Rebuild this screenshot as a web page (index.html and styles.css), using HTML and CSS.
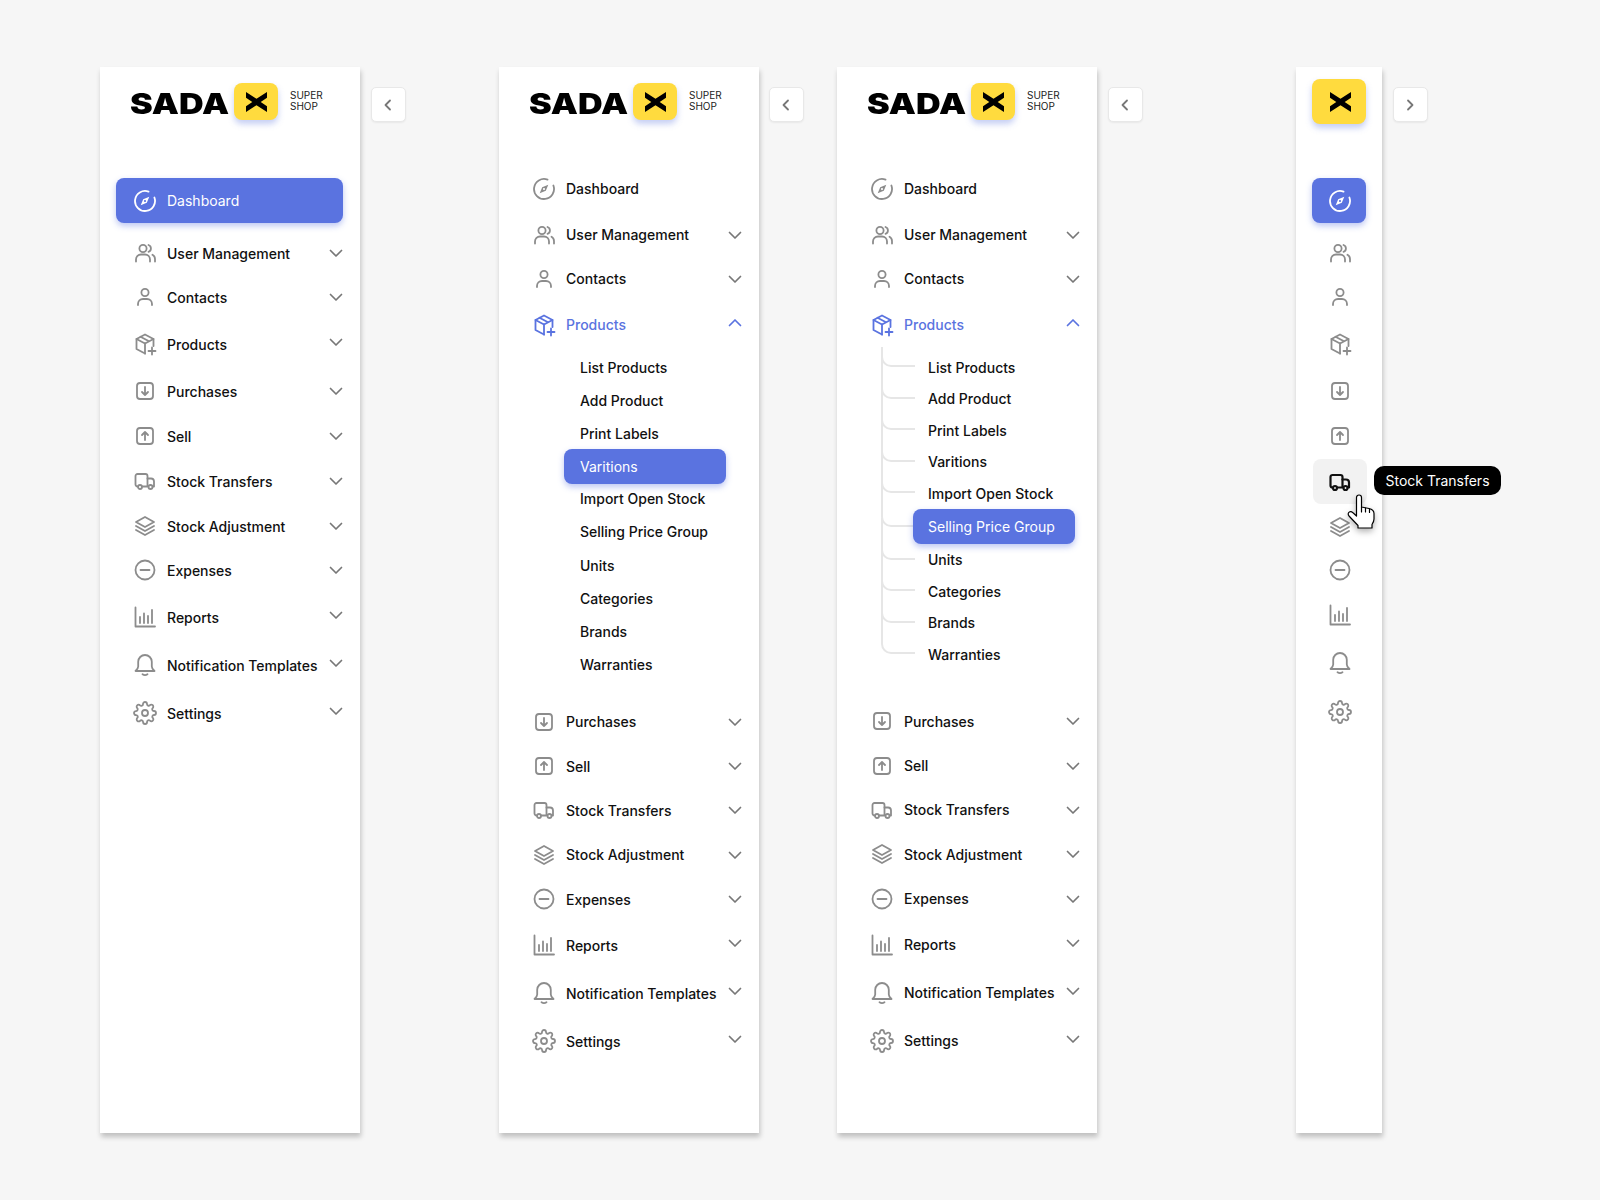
FILE: index.html
```html
<!DOCTYPE html>
<html lang="en">
<head>
<meta charset="utf-8">
<title>SADA sidebar states</title>
<link rel="stylesheet" href="styles.css">
</head>
<body>
<svg class="sprite" xmlns="http://www.w3.org/2000/svg">
  <defs>
    <symbol id="i-compass" viewBox="0 0 24 24"><path d="M15.500 2.600A10 10 0 1 0 21.400 8.500"/><path class="solid" fill-rule="evenodd" d="M16.300 7.700l-2.500 6.100-6.100 2.500 2.500-6.100zM12 10.900a1.100 1.100 0 1 0 0 2.200 1.100 1.100 0 0 0 0-2.200z"/></symbol>
    <symbol id="i-users" viewBox="0 0 24 24"><circle cx="10" cy="7.500" r="3.600"/><path d="M3 20.500v-2a5 5 0 0 1 5-5h4a5 5 0 0 1 5 5v2"/><path d="M15.500 4a3.600 3.600 0 0 1 0 6.800"/><path d="M19.500 13.800a5 5 0 0 1 2.500 4.400v2.300"/></symbol>
    <symbol id="i-user" viewBox="0 0 24 24"><circle cx="12" cy="7.500" r="3.600"/><path d="M5 20v-1a5 5 0 0 1 5-5h4a5 5 0 0 1 5 5v1"/></symbol>
    <symbol id="i-box" viewBox="0 0 24 24"><path d="M20.500 14V7L12 2.500 3.500 7v10l8.500 4.500"/><path d="M3.500 7l8.500 4.500L20.500 7M12 11.500v10M7.500 4.800l8.500 4.500"/><path d="M19 15.500v7M15.500 19h7"/></symbol>
    <symbol id="i-down" viewBox="0 0 24 24"><rect x="4" y="4" width="16" height="16" rx="3"/><path d="M12 8v8M9 13l3 3 3-3"/></symbol>
    <symbol id="i-up" viewBox="0 0 24 24"><rect x="4" y="4" width="16" height="16" rx="3"/><path d="M12 16V8M9 11l3-3 3 3"/></symbol>
    <symbol id="i-truck" viewBox="0 0 24 24"><path d="M5 17.500h-.5a2 2 0 0 1-2-2V7a2 2 0 0 1 2-2h8a2 2 0 0 1 2 2v10.500H9"/><path d="M14.500 9.500H18a3 3 0 0 1 3 3v5h-1"/><circle cx="7" cy="18" r="2"/><circle cx="17.500" cy="18" r="2"/></symbol>
    <symbol id="i-layers" viewBox="0 0 24 24"><path d="M12 3l9 5-9 5-9-5z"/><path d="M3 12l9 5 9-5M3 16l9 5 9-5"/></symbol>
    <symbol id="i-minus" viewBox="0 0 24 24"><circle cx="12" cy="12" r="9.500"/><path d="M7.500 12h9"/></symbol>
    <symbol id="i-chart" viewBox="0 0 24 24"><path d="M2.500 2.500v19H22"/><path d="M7 12v6M11 8.500V18M15 11v7M19 5v13"/></symbol>
    <symbol id="i-bell" viewBox="0 0 24 24"><path d="M12 2a6.800 6.800 0 0 0-6.800 6.800v4.700c0 2-1.400 3.300-2.700 4.500h19c-1.300-1.200-2.700-2.500-2.700-4.500V8.800A6.800 6.800 0 0 0 12 2z"/><path d="M9.500 21.300c1.500 1 3.500 1 5 0"/></symbol>
    <symbol id="i-gear" viewBox="0 0 24 24"><circle cx="12" cy="12" r="3"/><path d="M19.400 15a1.650 1.650 0 0 0 .33 1.820l.06.06a2 2 0 0 1 0 2.830 2 2 0 0 1-2.830 0l-.06-.06a1.650 1.650 0 0 0-1.820-.33 1.650 1.650 0 0 0-1 1.510V21a2 2 0 0 1-2 2 2 2 0 0 1-2-2v-.09A1.650 1.650 0 0 0 9 19.400a1.650 1.650 0 0 0-1.820.33l-.06.06a2 2 0 0 1-2.830 0 2 2 0 0 1 0-2.830l.06-.06a1.650 1.650 0 0 0 .33-1.820 1.650 1.650 0 0 0-1.510-1H3a2 2 0 0 1-2-2 2 2 0 0 1 2-2h.09A1.650 1.650 0 0 0 4.600 9a1.650 1.650 0 0 0-.33-1.820l-.06-.06a2 2 0 0 1 0-2.830 2 2 0 0 1 2.830 0l.06.06a1.650 1.650 0 0 0 1.820.33H9a1.650 1.650 0 0 0 1-1.510V3a2 2 0 0 1 2-2 2 2 0 0 1 2 2v.09a1.650 1.650 0 0 0 1 1.510 1.650 1.650 0 0 0 1.820-.33l.06-.06a2 2 0 0 1 2.830 0 2 2 0 0 1 0 2.830l-.06.06a1.650 1.650 0 0 0-.33 1.820V9a1.650 1.650 0 0 0 1.510 1H21a2 2 0 0 1 2 2 2 2 0 0 1-2 2h-.09a1.650 1.650 0 0 0-1.510 1z"/></symbol>
    <symbol id="i-chev-down" viewBox="0 0 14 14"><path d="M1.500 4.500L7 10l5.500-5.500"/></symbol>
    <symbol id="i-chev-up" viewBox="0 0 14 14"><path d="M1.500 9.500L7 4l5.500 5.500"/></symbol>
    <symbol id="i-chev-left" viewBox="0 0 14 14"><path d="M9 2.500L4.500 7 9 11.500"/></symbol>
    <symbol id="i-chev-right" viewBox="0 0 14 14"><path d="M5 2.500L9.500 7 5 11.500"/></symbol>
    <symbol id="i-mark" viewBox="0 0 20 19"><path class="solid" d="M0 0l10 6.500L20 0v5.500l-6 4 6 4V19l-10-6.500L0 19v-5.500l6-4-6-4z"/></symbol>
  </defs>
</svg>

<main class="board">

  <!-- open, nothing expanded -->
  <section class="col col-1">
    <aside class="panel panel-first">
      <div class="logo">
        <span class="wordmark"><span>SADA</span></span>
        <span class="mark"><svg><use href="#i-mark"/></svg></span>
        <span class="tagline">SUPER<br>SHOP</span>
      </div>
      <nav class="nav">
        <a class="row active"><svg class="icon"><use href="#i-compass"/></svg><span>Dashboard</span></a>
        <a class="row"><svg class="icon"><use href="#i-users"/></svg><span>User Management</span><svg class="chev"><use href="#i-chev-down"/></svg></a>
        <a class="row"><svg class="icon"><use href="#i-user"/></svg><span>Contacts</span><svg class="chev"><use href="#i-chev-down"/></svg></a>
        <a class="row tall"><svg class="icon"><use href="#i-box"/></svg><span>Products</span><svg class="chev"><use href="#i-chev-down"/></svg></a>
        <a class="row"><svg class="icon"><use href="#i-down"/></svg><span>Purchases</span><svg class="chev"><use href="#i-chev-down"/></svg></a>
        <a class="row"><svg class="icon"><use href="#i-up"/></svg><span>Sell</span><svg class="chev"><use href="#i-chev-down"/></svg></a>
        <a class="row"><svg class="icon"><use href="#i-truck"/></svg><span>Stock Transfers</span><svg class="chev"><use href="#i-chev-down"/></svg></a>
        <a class="row"><svg class="icon"><use href="#i-layers"/></svg><span>Stock Adjustment</span><svg class="chev"><use href="#i-chev-down"/></svg></a>
        <a class="row"><svg class="icon"><use href="#i-minus"/></svg><span>Expenses</span><svg class="chev"><use href="#i-chev-down"/></svg></a>
        <a class="row tall"><svg class="icon"><use href="#i-chart"/></svg><span>Reports</span><svg class="chev"><use href="#i-chev-down"/></svg></a>
        <a class="row tall"><svg class="icon"><use href="#i-bell"/></svg><span>Notification Templates</span><svg class="chev"><use href="#i-chev-down"/></svg></a>
        <a class="row tall"><svg class="icon"><use href="#i-gear"/></svg><span>Settings</span><svg class="chev"><use href="#i-chev-down"/></svg></a>
      </nav>
    </aside>
    <button class="toggle"><svg><use href="#i-chev-left"/></svg></button>
  </section>

  <!-- products expanded -->
  <section class="col col-2">
    <aside class="panel">
      <div class="logo">
        <span class="wordmark"><span>SADA</span></span>
        <span class="mark"><svg><use href="#i-mark"/></svg></span>
        <span class="tagline">SUPER<br>SHOP</span>
      </div>
      <nav class="nav nav-plain">
        <a class="row tall"><svg class="icon"><use href="#i-compass"/></svg><span>Dashboard</span></a>
        <a class="row"><svg class="icon"><use href="#i-users"/></svg><span>User Management</span><svg class="chev"><use href="#i-chev-down"/></svg></a>
        <a class="row"><svg class="icon"><use href="#i-user"/></svg><span>Contacts</span><svg class="chev"><use href="#i-chev-down"/></svg></a>
        <a class="row tall open"><svg class="icon"><use href="#i-box"/></svg><span>Products</span><svg class="chev"><use href="#i-chev-up"/></svg></a>
        <ul class="sub">
          <li><a>List Products</a></li>
          <li><a>Add Product</a></li>
          <li><a>Print Labels</a></li>
          <li><a class="on">Varitions</a></li>
          <li><a>Import Open Stock</a></li>
          <li><a>Selling Price Group</a></li>
          <li><a>Units</a></li>
          <li><a>Categories</a></li>
          <li><a>Brands</a></li>
          <li><a>Warranties</a></li>
        </ul>
        <a class="row"><svg class="icon"><use href="#i-down"/></svg><span>Purchases</span><svg class="chev"><use href="#i-chev-down"/></svg></a>
        <a class="row"><svg class="icon"><use href="#i-up"/></svg><span>Sell</span><svg class="chev"><use href="#i-chev-down"/></svg></a>
        <a class="row"><svg class="icon"><use href="#i-truck"/></svg><span>Stock Transfers</span><svg class="chev"><use href="#i-chev-down"/></svg></a>
        <a class="row"><svg class="icon"><use href="#i-layers"/></svg><span>Stock Adjustment</span><svg class="chev"><use href="#i-chev-down"/></svg></a>
        <a class="row"><svg class="icon"><use href="#i-minus"/></svg><span>Expenses</span><svg class="chev"><use href="#i-chev-down"/></svg></a>
        <a class="row tall"><svg class="icon"><use href="#i-chart"/></svg><span>Reports</span><svg class="chev"><use href="#i-chev-down"/></svg></a>
        <a class="row tall"><svg class="icon"><use href="#i-bell"/></svg><span>Notification Templates</span><svg class="chev"><use href="#i-chev-down"/></svg></a>
        <a class="row tall"><svg class="icon"><use href="#i-gear"/></svg><span>Settings</span><svg class="chev"><use href="#i-chev-down"/></svg></a>
      </nav>
    </aside>
    <button class="toggle"><svg><use href="#i-chev-left"/></svg></button>
  </section>

  <!-- products expanded, with tree lines -->
  <section class="col col-3">
    <aside class="panel">
      <div class="logo">
        <span class="wordmark"><span>SADA</span></span>
        <span class="mark"><svg><use href="#i-mark"/></svg></span>
        <span class="tagline">SUPER<br>SHOP</span>
      </div>
      <nav class="nav nav-plain">
        <a class="row tall"><svg class="icon"><use href="#i-compass"/></svg><span>Dashboard</span></a>
        <a class="row"><svg class="icon"><use href="#i-users"/></svg><span>User Management</span><svg class="chev"><use href="#i-chev-down"/></svg></a>
        <a class="row"><svg class="icon"><use href="#i-user"/></svg><span>Contacts</span><svg class="chev"><use href="#i-chev-down"/></svg></a>
        <a class="row tall open"><svg class="icon"><use href="#i-box"/></svg><span>Products</span><svg class="chev"><use href="#i-chev-up"/></svg></a>
        <ul class="sub tree">
          <li><a>List Products</a></li>
          <li><a>Add Product</a></li>
          <li><a>Print Labels</a></li>
          <li><a>Varitions</a></li>
          <li><a>Import Open Stock</a></li>
          <li><a class="on">Selling Price Group</a></li>
          <li><a>Units</a></li>
          <li><a>Categories</a></li>
          <li><a>Brands</a></li>
          <li><a>Warranties</a></li>
        </ul>
        <a class="row"><svg class="icon"><use href="#i-down"/></svg><span>Purchases</span><svg class="chev"><use href="#i-chev-down"/></svg></a>
        <a class="row"><svg class="icon"><use href="#i-up"/></svg><span>Sell</span><svg class="chev"><use href="#i-chev-down"/></svg></a>
        <a class="row"><svg class="icon"><use href="#i-truck"/></svg><span>Stock Transfers</span><svg class="chev"><use href="#i-chev-down"/></svg></a>
        <a class="row"><svg class="icon"><use href="#i-layers"/></svg><span>Stock Adjustment</span><svg class="chev"><use href="#i-chev-down"/></svg></a>
        <a class="row"><svg class="icon"><use href="#i-minus"/></svg><span>Expenses</span><svg class="chev"><use href="#i-chev-down"/></svg></a>
        <a class="row tall"><svg class="icon"><use href="#i-chart"/></svg><span>Reports</span><svg class="chev"><use href="#i-chev-down"/></svg></a>
        <a class="row tall"><svg class="icon"><use href="#i-bell"/></svg><span>Notification Templates</span><svg class="chev"><use href="#i-chev-down"/></svg></a>
        <a class="row tall"><svg class="icon"><use href="#i-gear"/></svg><span>Settings</span><svg class="chev"><use href="#i-chev-down"/></svg></a>
      </nav>
    </aside>
    <button class="toggle"><svg><use href="#i-chev-left"/></svg></button>
  </section>

  <!-- collapsed rail -->
  <section class="col col-4">
    <aside class="panel rail panel-first">
      <div class="rail-logo"><svg><use href="#i-mark"/></svg></div>
      <nav class="nav">
        <a class="row active"><svg class="icon"><use href="#i-compass"/></svg></a>
        <a class="row"><svg class="icon"><use href="#i-users"/></svg></a>
        <a class="row"><svg class="icon"><use href="#i-user"/></svg></a>
        <a class="row tall"><svg class="icon"><use href="#i-box"/></svg></a>
        <a class="row"><svg class="icon"><use href="#i-down"/></svg></a>
        <a class="row"><svg class="icon"><use href="#i-up"/></svg></a>
        <a class="row hover"><svg class="icon"><use href="#i-truck"/></svg></a>
        <a class="row"><svg class="icon"><use href="#i-layers"/></svg></a>
        <a class="row"><svg class="icon"><use href="#i-minus"/></svg></a>
        <a class="row tall"><svg class="icon"><use href="#i-chart"/></svg></a>
        <a class="row tall"><svg class="icon"><use href="#i-bell"/></svg></a>
        <a class="row tall"><svg class="icon"><use href="#i-gear"/></svg></a>
      </nav>
      <div class="tooltip">Stock Transfers</div>
      <svg class="hand" viewBox="0 0 30 36"><path d="M9.500 3.500a2.500 2.500 0 0 1 5 0V13l7.500 1.500c3 .7 5 2 5 5V25c0 2.500-1 4-2 5.500V34H11v-2.500L2 22c-1.200-1.500-1-3.300.3-4 1.200-.7 2.600-.3 3.700.8l3.500 3.200z"/><path d="M14.500 13v5M18.500 14v4M22.500 15v3.500"/></svg>
    </aside>
    <button class="toggle"><svg><use href="#i-chev-right"/></svg></button>
  </section>

</main>
</body>
</html>
```

FILE: styles.css
```css
* {
    box-sizing: border-box;
}
html, body {
    margin: 0;
    padding: 0;
}
body {
    background: #f6f6f6;
    color: #111;
    font-family: Inter, "Noto Sans", sans-serif;
    font-size: 14px;
    font-weight: 500;
}
.sprite {
    display: none;
}
svg {
    fill: none;
    stroke: currentColor;
    stroke-width: 1.8;
    stroke-linecap: round;
    stroke-linejoin: round;
}
.solid {
    fill: currentColor;
    stroke: none;
}

/* page */
.board {
    display: flex;
    align-items: flex-start;
    height: 1200px;
    padding: 67px 0 0 100px;
}
.col {
    display: flex;
    align-items: flex-start;
    gap: 10.5px;
}
.col-2 {
    gap: 9.5px;
    margin-left: 93.5px;
}
.col-3 {
    margin-left: 33.5px;
}
.col-4 {
    margin-left: 153.5px;
}
.panel {
    display: flow-root;
    position: relative;
    width: 260px;
    height: 1066px;
    background: #fff;
    box-shadow: 1px 4px 5px rgba(0, 0, 0, .22);
}
.toggle {
    display: flex;
    align-items: center;
    justify-content: center;
    width: 35px;
    height: 35px;
    margin-top: 20px;
    padding: 0;
    background: #fff;
    border: 1px solid #e8e8e8;
    border-radius: 5px;
    box-shadow: 0 1px 2px rgba(0, 0, 0, .06);
    color: #777;
}
.toggle svg {
    width: 14px;
    height: 14px;
}

/* logo */
.logo {
    display: flex;
    align-items: center;
    height: 37px;
    margin-top: 16px;
    padding-left: 29.5px;
}
.wordmark {
    width: 98.5px;
    margin-top: 5px;
    color: #000;
    font-size: 28px;
    font-weight: 900;
    line-height: 28px;
}
.wordmark span {
    display: inline-block;
    transform: scaleX(1.22);
    transform-origin: left center;
}
.mark, .rail-logo {
    display: flex;
    align-items: center;
    justify-content: center;
    background: #ffdb3e;
    border-radius: 8px;
    box-shadow: 0 4px 6px rgba(90, 115, 224, .35);
    color: #000;
}
.mark {
    width: 44px;
    height: 37px;
    margin-left: 6px;
}
.mark svg, .rail-logo svg {
    width: 21px;
    height: 20px;
}
.tagline {
    margin: -1px 0 0 12px;
    color: #222;
    font-size: 10px;
    font-weight: 400;
    line-height: 11.5px;
}

/* menu */
.nav {
    margin-top: 58px;
}
.nav-plain {
    margin-top: 44.5px;
}
.row {
    display: flex;
    align-items: center;
    gap: 10px;
    height: 44px;
    padding: 0 17px 0 33px;
    white-space: nowrap;
}
.sub ~ .row {
    height: 44.4px;
}
.row.tall, .sub ~ .row.tall {
    height: 48px;
}
.row.tall .chev {
    margin-top: -4px;
}
.row .icon {
    flex: none;
    width: 24px;
    height: 24px;
    color: #8c8c8c;
}
.row .chev {
    flex: none;
    width: 14px;
    height: 14px;
    margin-left: auto;
    color: #777;
    stroke-width: 1.7;
}
.row.open, .row.open .icon, .row.open .chev {
    color: #5a73e0;
}
.row.active {
    height: 45px;
    margin: 0 17.5px 8px 16px;
    padding-left: 17px;
    background: #5a73e0;
    border-radius: 8px;
    box-shadow: 0 3px 6px rgba(90, 115, 224, .4);
    color: #fff;
    font-weight: 400;
}
.row.active .icon {
    color: #fff;
}
.panel-first .row:nth-child(4),
.panel-first .row:nth-child(5),
.panel-first .row:nth-child(6),
.panel-first .row:nth-child(7),
.panel-first .row:nth-child(8),
.panel-first .row:nth-child(10) {
    margin-top: 1px;
}

/* sub menu */
.sub {
    margin: 2.5px 0 18.5px;
    padding: 0;
    list-style: none;
}
.sub li {
    position: relative;
    height: 33.1px;
}
.sub a {
    position: relative;
    display: flex;
    align-items: center;
    height: 33px;
    margin: 0 33px 0 65px;
    padding-left: 16px;
}
.sub a.on {
    height: 35px;
    margin-top: -1px;
    background: #5a73e0;
    border-radius: 8px;
    box-shadow: 0 3px 6px rgba(90, 115, 224, .4);
    color: #fff;
    font-weight: 400;
}
.tree {
    margin: 3px 0 29px;
}
.tree li {
    height: 31.5px;
}
.tree li:has(.on) {
    height: 35px;
}
.tree a {
    height: 31.5px;
    margin: 0 22px 0 76px;
    padding-left: 15px;
}
.tree a.on {
    margin-top: 0;
}
.tree li::before {
    content: "";
    position: absolute;
    left: 44px;
    top: -26px;
    bottom: 50%;
    width: 32px;
    border-left: 2px solid #e6e6e6;
    border-bottom: 2px solid #e6e6e6;
    border-bottom-left-radius: 10px;
}
.tree li:first-child::before {
    top: -5px;
}

/* collapsed rail */
.rail {
    width: 86px;
}
.rail-logo {
    width: 54px;
    height: 45px;
    margin: 12px 0 0 16px;
    padding-left: 2px;
}
.rail .nav {
    margin-top: 54px;
}
.rail .row {
    justify-content: center;
    margin-right: 16px;
    margin-left: 16px;
    padding: 0 0 0 2px;
}
.rail .row.active {
    margin-bottom: 8px;
}
.rail .row:nth-child(9),
.rail .row:nth-child(10) {
    margin-top: -1px;
}
.rail .row:nth-child(12) {
    margin-top: 1px;
}
.rail .row.hover {
    height: 45px;
    margin-right: 15px;
    margin-left: 17px;
    padding: 0;
    background: #f2f2f2;
    border-radius: 8px;
}
.rail .row.hover .icon {
    color: #111;
    stroke-width: 2.2;
}
.tooltip {
    position: absolute;
    left: 78px;
    top: 399px;
    z-index: 2;
    width: 127px;
    height: 29px;
    background: #000;
    border-radius: 10px;
    color: #fff;
    font-size: 14px;
    font-weight: 400;
    line-height: 29px;
    text-align: center;
}
.hand {
    position: absolute;
    left: 51px;
    top: 427px;
    z-index: 3;
    width: 30px;
    height: 36px;
    fill: #fff;
    stroke: #000;
    stroke-width: 1.2;
    filter: drop-shadow(0 3px 3px rgba(0, 0, 0, .3));
}
```
